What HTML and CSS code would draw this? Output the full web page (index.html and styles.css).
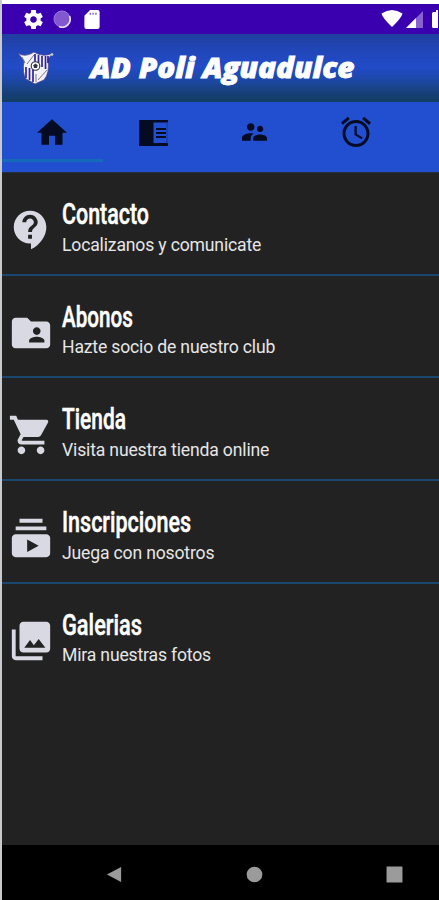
FILE: index.html
```html
<!DOCTYPE html>
<html lang="es">
<head>
<meta charset="utf-8">
<title>AD Poli Aguadulce</title>
<link rel="stylesheet" href="styles.css">
</head>
<body>
<div class="phone">
  <div class="status">
    <svg class="gear" viewBox="2 2 20 20"><path d="M19.43 12.98c.04-.32.07-.64.07-.98s-.03-.66-.07-.98l2.11-1.65c.19-.15.24-.42.12-.64l-2-3.46c-.12-.22-.39-.3-.61-.22l-2.49 1c-.52-.4-1.08-.73-1.69-.98l-.38-2.65C14.46 2.18 14.25 2 14 2h-4c-.25 0-.46.18-.49.42l-.38 2.65c-.61.25-1.17.59-1.69.98l-2.49-1c-.23-.09-.49 0-.61.22l-2 3.46c-.13.22-.07.49.12.64l2.11 1.65c-.04.32-.07.65-.07.98s.03.66.07.98l-2.11 1.65c-.19.15-.24.42-.12.64l2 3.46c.12.22.39.3.61.22l2.49-1c.52.4 1.08.73 1.69.98l.38 2.65c.03.24.24.42.49.42h4c.25 0 .46-.18.49-.42l.38-2.65c.61-.25 1.17-.59 1.69-.98l2.49 1c.23.09.49 0 .61-.22l2-3.46c.12-.22.07-.49-.12-.64l-2.11-1.65zM12 15.5c-1.93 0-3.5-1.57-3.5-3.5s1.57-3.5 3.5-3.5 3.5 1.57 3.5 3.5-1.57 3.5-3.5 3.5z"/></svg>
    <svg class="sync" viewBox="0 0 18 18"><circle cx="9" cy="9" r="8" fill="#8357cf" stroke="#9c7bdb"/><path d="M16.500 6A8 8 0 0 1 6 16.500" fill="none" stroke="#e6dcfa" stroke-width="1.700"/></svg>
    <svg class="card" viewBox="4 2 16 20"><path d="M18 2h-8L4.020 8 4 20c0 1.100.9 2 2 2h12c1.100 0 2-.9 2-2V4c0-1.100-.9-2-2-2z"/><path d="M9.500 5h1.300v2H9.500zM12.500 5h1.300v2h-1.300zM15.500 5h1.300v2h-1.300z" fill="#6a42c4"/></svg>
    <svg class="wifi" viewBox="0 0 22 17"><path d="M.5 3.500Q11-3.500 21.500 3.500Q20.500 8 11 17Q1.500 8 .5 3.500z"/></svg>
    <svg class="signal" viewBox="0 0 17 17"><path d="M17 0v17H0z" fill="#8962d2"/><path d="M10 7v10H0z"/></svg>
    <svg class="battery" viewBox="0 0 6 18"><path d="M6 0H4v2H1.500Q0 2 0 3.500V16.500Q0 18 1.500 18H6z"/></svg>
  </div>

  <header class="header">
    <svg class="crest" viewBox="0 0 38 34">
      <path d="M1 2Q8 7 17 1Q26 7 36 2L31 8Q33 22 27 29Q22 31 18 33Q13 30 9 28Q5 22 7 10z" fill="#f3f1fa" stroke="#49438c" stroke-width=".8"/>
      <path d="M18 3v8M21.500 4v8M25 5v11M28.500 5v13M31 5v7M9 16v11M12.500 17v12M16 18v13" stroke="#30249b" stroke-width="1.700"/>
      <path d="M5 6l3 6M10 13l7-9M21 29l9-10M19 23v8" stroke="#77777f" fill="none"/>
      <circle cx="18.500" cy="15" r="4.300" fill="#fff" stroke="#35343f" stroke-width="1.100"/>
      <path d="M18.500 12.500l2.300 1.800-.9 2.700h-2.800l-.9-2.700z" fill="#35343f"/>
      <circle cx="35" cy="3.500" r="1.300" fill="#b9d5dd"/>
    </svg>
    <svg class="brand" viewBox="0 0 280 40"><text x="0.500" y="30.500" textLength="264" lengthAdjust="spacingAndGlyphs">AD Poli Aguadulce</text></svg>
  </header>

  <nav class="tabs">
    <div class="tab active"><svg class="home" viewBox="2 3 20 17"><path d="M10 20v-6h4v6h5v-8h3L12 3 2 12h3v8z"/></svg></div>
    <div class="tab"><svg class="reader" viewBox="0 0 29 26"><path d="M0 0h29v2.500H14.500v20.500H29V26H0z"/><path d="M17 8h10v2H17zM17 12h10v2H17zM17 16h10v2H17z"/><path d="M28 2v21" stroke="#173994" stroke-width="1"/></svg></div>
    <div class="tab"><svg class="people" viewBox="2 5 20 14"><path d="M16.500 12c1.380 0 2.490-1.120 2.490-2.500S17.880 7 16.500 7C15.120 7 14 8.120 14 9.500s1.120 2.500 2.500 2.500zM9 11c1.660 0 2.990-1.340 2.990-3S10.660 5 9 5C7.340 5 6 6.340 6 8s1.340 3 3 3zm7.500 3c-1.830 0-5.500.92-5.500 2.750V19h11v-2.250c0-1.830-3.670-2.750-5.500-2.750zM9 13c-2.330 0-7 1.170-7 3.500V19h7v-2.250c0-.85.330-2.340 2.370-3.470C10.500 13.100 9.660 13 9 13z"/></svg></div>
    <div class="tab"><svg class="alarm" viewBox="2 2 20 20"><path d="M22 5.720l-4.600-3.860-1.290 1.530 4.600 3.860L22 5.720zM7.880 3.390L6.600 1.860 2 5.710l1.290 1.530 4.590-3.850zM12.500 8H11v6l4.750 2.850.75-1.230-4-2.370V8zM12 4c-4.970 0-9 4.030-9 9s4.020 9 9 9c4.970 0 9-4.030 9-9s-4.030-9-9-9zm0 16c-3.870 0-7-3.130-7-7s3.130-7 7-7 7 3.130 7 7-3.130 7-7 7z"/></svg></div>
  </nav>

  <main class="list">
    <section class="row">
      <svg class="icon" viewBox="0 0 24 24"><path d="M11.500 2C6.810 2 3 5.810 3 10.500S6.810 19 11.500 19h.5v3c4.860-2.340 8-7 8-11.500C20 5.810 16.190 2 11.500 2zm1 14.500h-2v-2h2v2zm0-3.500h-2c0-3.250 3-3 3-5 0-1.100-.9-2-2-2s-2 .9-2 2h-2c0-2.210 1.790-4 4-4s4 1.790 4 4c0 2.500-3 2.750-3 5z"/></svg>
      <div class="copy"><svg class="title" viewBox="0 0 200 36"><text x="0" y="28.500" textLength="87" lengthAdjust="spacingAndGlyphs">Contacto</text></svg><p>Localizanos y comunicate</p></div>
    </section>
    <section class="row">
      <svg class="icon" viewBox="0 0 24 24"><path d="M20 6h-8l-2-2H4c-1.100 0-1.990.9-1.990 2L2 18c0 1.100.9 2 2 2h16c1.100 0 2-.9 2-2V8c0-1.100-.9-2-2-2zm-5 3c1.100 0 2 .9 2 2s-.9 2-2 2-2-.9-2-2 .9-2 2-2zm4 8h-8v-1c0-1.330 2.670-2 4-2s4 .67 4 2v1z"/></svg>
      <div class="copy"><svg class="title" viewBox="0 0 200 36"><text x="0" y="28.500" textLength="71" lengthAdjust="spacingAndGlyphs">Abonos</text></svg><p>Hazte socio de nuestro club</p></div>
    </section>
    <section class="row">
      <svg class="icon" viewBox="0 0 24 24"><path d="M7 18c-1.100 0-1.990.9-1.990 2S5.900 22 7 22s2-.9 2-2-.9-2-2-2zM1 2v2h2l3.600 7.590-1.350 2.450c-.16.28-.25.61-.25.96 0 1.100.9 2 2 2h12v-2H7.420c-.14 0-.25-.11-.25-.25l.03-.12.900-1.630h7.450c.75 0 1.410-.41 1.750-1.030l3.580-6.490A1 1 0 0 0 20 4H5.210l-.94-2H1zm16 16c-1.100 0-1.990.9-1.990 2s.89 2 1.990 2 2-.9 2-2-.9-2-2-2z"/></svg>
      <div class="copy"><svg class="title" viewBox="0 0 200 36"><text x="0" y="28.500" textLength="64" lengthAdjust="spacingAndGlyphs">Tienda</text></svg><p>Visita nuestra tienda online</p></div>
    </section>
    <section class="row">
      <svg class="icon" viewBox="0 0 24 24"><path d="M20 8H4V6h16v2zm-2-6H6v2h12V2zm4 10v8c0 1.100-.9 2-2 2H4c-1.100 0-2-.9-2-2v-8c0-1.100.9-2 2-2h16c1.100 0 2 .9 2 2zm-6 4l-6-3.270v6.530L16 16z"/></svg>
      <div class="copy"><svg class="title" viewBox="0 0 200 36"><text x="0" y="28.500" textLength="129" lengthAdjust="spacingAndGlyphs">Inscripciones</text></svg><p>Juega con nosotros</p></div>
    </section>
    <section class="row">
      <svg class="icon" viewBox="0 0 24 24"><path d="M22 16V4c0-1.100-.9-2-2-2H8c-1.100 0-2 .9-2 2v12c0 1.100.9 2 2 2h12c1.100 0 2-.9 2-2zm-13.500-.5l3-4 2 2.700 2.500-3.200 3.500 4.500h-11zM2 6v14c0 1.100.9 2 2 2h14v-2H4V6H2z"/></svg>
      <div class="copy"><svg class="title" viewBox="0 0 200 36"><text x="0" y="28.500" textLength="80" lengthAdjust="spacingAndGlyphs">Galerias</text></svg><p>Mira nuestras fotos</p></div>
    </section>
  </main>

  <footer class="navbar">
    <svg viewBox="0 0 16 18"><path d="M15 1v16L0 9z"/></svg>
    <svg viewBox="0 0 18 18"><circle cx="9" cy="9" r="8.300"/></svg>
    <svg viewBox="0 0 16 16"><rect x=".5" y=".5" width="15" height="15" rx=".5"/></svg>
  </footer>
</div>
</body>
</html>
```
FILE: styles.css
```css
* { box-sizing: border-box; }
html, body { margin: 0; height: 900px; overflow: hidden; }
body { background: #fff; font-family: Roboto, "Liberation Sans", sans-serif; }
svg { display: block; flex: none; }

.phone {
  height: 900px;
  padding-top: 4px;
  border-left: 2px solid #c9cacd;
  display: flex;
  flex-direction: column;
}

.status {
  height: 30px;
  flex: none;
  background: #3a00b0;
  fill: #fff;
  display: flex;
  align-items: center;
  padding: 0 0 0 22px;
  overflow: hidden;
}
.gear { width: 19px; height: 19px; }
.sync { width: 18px; height: 18px; margin-left: 10px; }
.card { width: 16px; height: 19px; margin-left: 13px; }
.wifi { width: 22px; height: 17px; margin: 0 0 2px 281px; }
.signal { width: 17px; height: 17px; margin: 0 0 0 3px; }
.battery { width: 6px; height: 18px; margin-left: 9px; }

.header {
  height: 68px;
  flex: none;
  display: flex;
  align-items: center;
  padding-left: 15px;
  background: linear-gradient(#203f9f 0%, #2147bb 28%, #214bc8 48%, #1d48a8 67%, #17417f 83%, #123d61 100%);
}
.crest { width: 38px; height: 34px; }
.brand { width: 280px; height: 40px; margin: 0 0 2px 35px; overflow: visible; }
.brand text { font: italic 800 28px "Open Sans", sans-serif; fill: #fff; stroke: #fff; stroke-width: .8; }

.tabs {
  height: 70px;
  flex: none;
  background: #214fd0;
  fill: #050b22;
  display: grid;
  grid-template-columns: repeat(4, 101.300px);
}
.tab {
  height: 60px;
  display: flex;
  align-items: center;
  justify-content: center;
  padding-right: 1.500px;
  border-bottom: 3px solid transparent;
}
.active { border-bottom-color: #146bb8; }
.home { width: 30px; height: 26px; margin-top: 2px; }
.reader { width: 29px; height: 26px; margin-top: 5px; }
.people { width: 25px; height: 18px; margin-top: 3px; }
.alarm { width: 30px; height: 30px; margin-top: 3px; }

.list { flex: 1; background: #222; border-top: 1px solid #24313b; }
.row {
  height: 102.700px;
  padding: 22px 0 0 6px;
  display: flex;
  border-bottom: 2px solid #1b4670;
}
.row:last-child { border-bottom: 0; }
.icon { width: 46px; height: 46px; margin-top: 12px; fill: #d9d9e3; }
.copy { margin-left: 8px; }
.title { width: 200px; height: 36px; overflow: visible; }
.title text { font: 500 29.500px Roboto, sans-serif; fill: #fff; stroke: #fff; stroke-width: .5; }
.copy p { margin: 2.500px 0 0; font-size: 17.600px; line-height: 22px; letter-spacing: -.17px; color: #e6e6e6; white-space: nowrap; }

.navbar {
  height: 55px;
  flex: none;
  background: #000;
  fill: #9b9b9b;
  display: flex;
  align-items: center;
  gap: 123px;
  padding: 3px 0 0 104px;
}
.navbar svg { width: 17px; height: 17px; }
```
